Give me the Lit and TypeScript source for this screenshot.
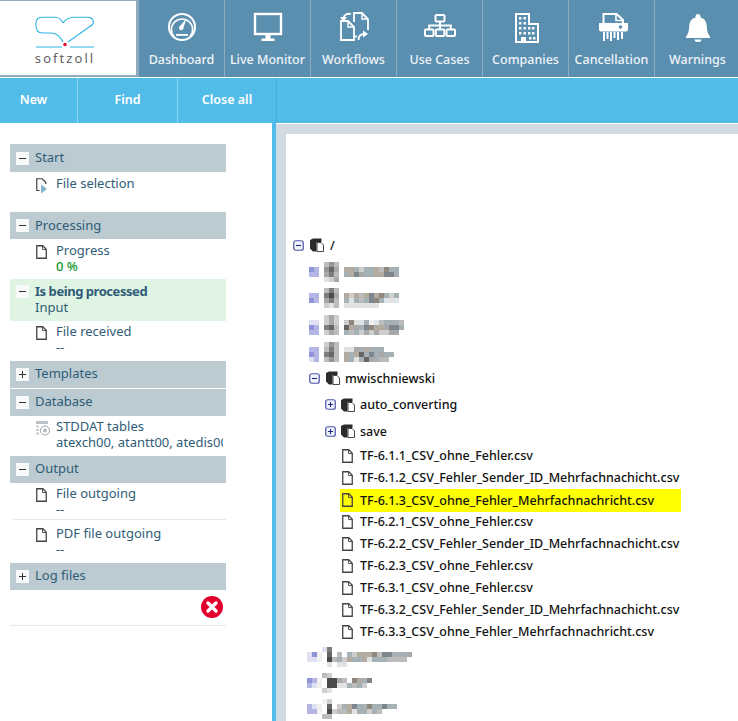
import { LitElement, html, css, svg } from "lit";
import { customElement } from "lit/decorators.js";

const NAV_ICONS: Record<string, unknown> = {
  dashboard: svg`<circle cx="18" cy="16" r="13" fill="none" stroke="#fff" stroke-width="2"/>
    <path d="M10 25.500a10.600 10.600 0 1 1 16 0" fill="none" stroke="#fff" stroke-width="1.600"/>
    <path d="M22.500 7.500l-3 9a2.300 2.300 0 1 1-3.400-1.600z" fill="#fff"/>
    <rect x="12" y="23" width="12" height="1.800" fill="#fff"/>`,
  monitor: svg`<rect x="5" y="3" width="26" height="20" fill="none" stroke="#fff" stroke-width="2.400"/>
    <rect x="15.500" y="24" width="5" height="4" fill="#fff"/>
    <rect x="11.500" y="27.500" width="13" height="2.500" fill="#fff"/>`,
  workflows: svg`<g fill="none" stroke="#fff" stroke-width="1.800">
      <path d="M5 10v19h13V16l-6-6z"/>
      <path d="M12 10v6h6" stroke-width="1.400"/>
      <path d="M18 11V2h8l6 6v11"/>
      <path d="M26 2v6h6" stroke-width="1.400"/>
      <path d="M18 25.500h3"/>
      <path d="M15 3C11 2 8 4 7.500 7"/>
      <path d="M22.500 29c0-4 2.500-6 6-6"/>
    </g>
    <path d="M4 6h7l-3.500 4.500zM27 19.500l5 3.500-5 3.500z" fill="#fff"/>`,
  usecases: svg`<g fill="none" stroke="#fff" stroke-width="2">
    <rect x="13.500" y="4" width="9" height="6.500" rx="1"/>
    <rect x="3" y="18.500" width="8.500" height="6.500" rx="1"/>
    <rect x="13.800" y="18.500" width="8.500" height="6.500" rx="1"/>
    <rect x="24.500" y="18.500" width="8.500" height="6.500" rx="1"/>
    <path d="M18 10.500v8M7.200 18.500v-4h21.600v4"/></g>`,
  companies: svg`<path d="M8 31V3h13v10h9v18z" fill="none" stroke="#fff" stroke-width="2"/>
    <path d="M11 6h2.400v2.600H11zM15.500 6h2.400v2.600h-2.400zM11 11h2.400v2.600H11zM15.500 11h2.400v2.600h-2.400zM11 16h2.400v2.600H11zM15.500 16h2.400v2.600h-2.400zM11 21h2.400v2.600H11zM15.500 21h2.400v2.600h-2.400zM20 16h2.400v2.600H20zM24 16h2.400v2.600H24zM20 21h2.400v2.600H20zM24 21h2.400v2.600H24zM13 26h5v5h-5zM21 26h2.400v2.600H21zM25 26h2.400v2.600H25z" fill="#fff"/>`,
  cancel: svg`<path d="M9.500 12V3h13l6.500 6v3" fill="none" stroke="#fff" stroke-width="2"/>
    <path d="M22 3v6.500h7" fill="none" stroke="#fff" stroke-width="1.600"/>
    <path d="M5 12h29v6.500a2 2 0 0 1-2 2H7a2 2 0 0 1-2-2z" fill="#fff"/>
    <circle cx="26.500" cy="16" r="1.800" fill="#5b8fb0"/>
    <path d="M9 21h2v9H9zM12.500 21h2v7h-2zM16 21h2v9h-2zM19.500 21h2v6h-2zM23 21h2v8h-2zM27 21h2v7h-2z" fill="#fff"/>`,
  bell: svg`<path d="M18 3a2.600 2.600 0 0 1 2.400 3.600c4.600 1 6.200 4.600 6.400 9.400.2 5 1.700 7.800 3.200 9.500v1.500H6v-1.500c1.500-1.700 3-4.500 3.200-9.500.2-4.800 1.800-8.400 6.400-9.400A2.600 2.600 0 0 1 18 3z" fill="#fff"/>
    <path d="M14.500 28.500h7a3.500 2.500 0 0 1-7 0z" fill="#fff"/>`,
};

const NAV = [
  ["Dashboard", "dashboard"],
  ["Live Monitor", "monitor"],
  ["Workflows", "workflows"],
  ["Use Cases", "usecases"],
  ["Companies", "companies"],
  ["Cancellation", "cancel"],
  ["Warnings", "bell"],
];

const FILES = [
  "TF-6.1.1_CSV_ohne_Fehler.csv",
  "TF-6.1.2_CSV_Fehler_Sender_ID_Mehrfachnachicht.csv",
  "TF-6.1.3_CSV_ohne_Fehler_Mehrfachnachricht.csv",
  "TF-6.2.1_CSV_ohne_Fehler.csv",
  "TF-6.2.2_CSV_Fehler_Sender_ID_Mehrfachnachicht.csv",
  "TF-6.2.3_CSV_ohne_Fehler.csv",
  "TF-6.3.1_CSV_ohne_Fehler.csv",
  "TF-6.3.2_CSV_Fehler_Sender_ID_Mehrfachnachicht.csv",
  "TF-6.3.3_CSV_ohne_Fehler_Mehrfachnachricht.csv",
];

// the reference has these folder names pixelated, one char per 5px block
const SHADES: Record<string, string> = {
  "1": "#4a4a4a", "2": "#666", "3": "#7d7d7d", "4": "#959595", "5": "#a8a8a8",
  "6": "#bcbcbc", "7": "#cecece", "8": "#e2e2e2", "9": "#f0f0f0",
  a: "#8f93d8", b: "#b4b7e4", c: "#dfe0f3",
  w: "#b3aaa0", k: "#a6b1b6", d: "#7d868d", e: "#8f877d", l: "#dde4ea",
};

const BLURRED_TOP = [
  ["...646", "ab.425.wwk7kkw6ekk", "bb.536.kwd5kkwwddk", "...875"],
  ["...636", "bb.315.w7w6wdwek7k", "ab.536.k8k6kdekl8l", "...786.8888888"],
  ["...757", "cc.757.7e8lk9l6kkk6", "ab.326.2w5kdeww5ddk", "bb.756.k6k75757755"],
  ["...746", "bb.636.885kwkkk", "ab.326.wkw2kdk5kk", "cb.646.wk8k25k66"],
];

const BLURRED_BOTTOM = [
  ["...c3...", "ca9.2.6.k7wwwe6ddkkk5", "cc9.16k7wkkw8kkk6666", "....8.88"],
  ["...67", "ab9.1156.ewkd", "bc9.1188k6k7", "...78"],
  ["...97", "bc9.2.7kwdkkekkdkk", "bb9.1766w8kk7k6", "...66"],
];

const block = (rows: string[]) => {
  const w = Math.max(...rows.map((r) => r.length)) * 5;
  const cells = rows.flatMap((row, y) =>
    [...row].map((ch, x) =>
      SHADES[ch] ? svg`<rect x=${x * 5} y=${y * 5} width="5" height="5" fill=${SHADES[ch]}/>` : null
    )
  );
  return html`<svg class="pixels" width=${w} height=${rows.length * 5}>${cells}</svg>`;
};

const fileIcon = html`<svg class="doc" width="11" height="14" viewBox="0 0 11 14">
  <path d="M.75.75h6l3.500 3.500v9h-9.500z" fill="none" stroke="#444" stroke-width="1.300"/>
  <path d="M6.500.75v3.800h3.700" fill="none" stroke="#444" stroke-width=".9"/>
</svg>`;

const folderIcon = html`<svg class="folder" width="14" height="14" viewBox="0 0 14 14">
  <path d="M0 2l3-1.500h8.500V4H6.500v9.500H3L0 10.500z" fill="#2b2b2b"/>
  <path d="M7 4.500h4l2.500 2.500v6.500H7z" fill="#fff" stroke="#333" stroke-width=".9"/>
</svg>`;

const treeToggle = (open: boolean) => html`<svg class="toggle" width="11" height="11" viewBox="0 0 11 11">
  <rect x=".75" y=".75" width="9.500" height="9.500" rx="2" fill="#f2f3fa" stroke="#4a55a8" stroke-width="1.200"/>
  <path d=${open ? "M3 5.500h5" : "M3 5.500h5M5.500 3v5"} stroke="#1c2a80" stroke-width="1.100"/>
</svg>`;

@customElement("app-root")
export class AppRoot extends LitElement {
  static styles = css`
    :host {
      display: block;
      width: 738px;
      height: 721px;
      overflow: hidden;
      background: #fff;
      font-family: "Noto Sans", "Open Sans", sans-serif;
      font-size: 13px;
    }
    .nav {
      display: flex;
      height: 77px;
      background: #5b8fb0;
      border-bottom: 1px solid #fff;
    }
    .logo-wrap {
      display: flex;
      flex: none;
      height: 77px;
      background: #8eabbf;
    }
    .logo {
      width: 136px;
      flex: none;
      height: 74px;
      margin-top: 1px;
      background: #fff;
      display: flex;
      flex-direction: column;
      align-items: center;
    }
    .logo-gap {
      width: 3px;
      flex: none;
    }
    .logo svg {
      display: block;
      margin: 14px 6px 0 0;
    }
    .logo span {
      font-family: "Open Sans", sans-serif;
      font-size: 13px;
      line-height: 15px;
      letter-spacing: 2.100px;
      color: #555;
      margin: 2px 6px 0 0;
    }
    .nav-item {
      width: 85px;
      flex: none;
      border-right: 1px solid #8eabbf;
      display: flex;
      flex-direction: column;
      align-items: center;
      color: #eef4f8;
      font-weight: 500;
      font-size: 12.500px;
    }
    .nav-item svg {
      display: block;
      margin-top: 11px;
    }
    .nav-item span {
      margin-top: 6px;
      line-height: 18px;
      white-space: nowrap;
    }
    .toolbar {
      display: flex;
      height: 45px;
      background: #52bce9;
      color: #fff;
      font-weight: 600;
      font-size: 12.500px;
    }
    .tool {
      display: flex;
      align-items: center;
      justify-content: center;
      box-sizing: border-box;
      padding-bottom: 2px;
      border-right: 1px solid #8fd3f0;
    }
    .tool.new {
      width: 78px;
      padding-right: 10px;
    }
    .tool.find {
      width: 100px;
    }
    .tool.close {
      width: 99px;
      border-right-color: #46a9d6;
    }
    .body {
      display: flex;
      height: 598px;
    }
    .left {
      width: 272px;
      flex: none;
      box-sizing: border-box;
      padding: 21px 46px 0 10px;
      color: #2f5c76;
    }
    .splitter {
      width: 4px;
      flex: none;
      background: #52bce9;
    }
    .right {
      flex: 1;
      margin-top: 1px;
      border-top: 10px solid #d3dbe2;
      border-left: 10px solid #d3dbe2;
      padding: 98px 0 0 7px;
      color: #111;
      overflow: hidden;
    }
    .head {
      display: flex;
      align-items: center;
      box-sizing: border-box;
      height: 27px;
      background: #bccbd2;
      padding: 0 0 2px 6px;
      gap: 6px;
    }
    .head.tall {
      height: 28px;
    }
    .head.up {
      padding-bottom: 3px;
    }
    .head.spaced {
      margin-bottom: 1px;
    }
    .box {
      width: 13px;
      height: 13px;
      flex: none;
      margin-top: 2px;
      background: #f7f9fa;
      position: relative;
    }
    .box::before {
      content: "";
      position: absolute;
      left: 3px;
      right: 3px;
      top: 6px;
      height: 1px;
      background: #333;
    }
    .box.plus::after {
      content: "";
      position: absolute;
      top: 3px;
      bottom: 3px;
      left: 6px;
      width: 1px;
      background: #333;
    }
    .item {
      display: flex;
      box-sizing: border-box;
      height: 40px;
      padding: 3px 3px 0 26px;
      line-height: 16px;
      gap: 9px;
      white-space: nowrap;
      overflow: hidden;
    }
    .item.db {
      gap: 6px;
      padding-top: 2px;
    }
    .item svg {
      flex: none;
      margin-top: 3px;
    }
    .item .lines {
      overflow: hidden;
    }
    .green {
      color: #0a9a2a;
      font-weight: 500;
    }
    .active {
      box-sizing: border-box;
      height: 42px;
      background: #e0f4e4;
      display: grid;
      grid-template-columns: 13px 1fr;
      align-content: start;
      column-gap: 6px;
      padding: 4px 0 0 6px;
      line-height: 16px;
    }
    .active b {
      font-weight: 700;
      letter-spacing: -0.450px;
      white-space: nowrap;
    }
    .active .sub {
      grid-column: 2;
    }
    .received {
      padding-top: 2px;
    }
    .divided {
      height: 37px;
      border-bottom: 1px solid #e6e9ea;
      margin-left: 3px;
      padding: 2px 3px 0 23px;
    }
    .tail {
      height: 43px;
      padding-top: 5px;
    }
    .error {
      display: flex;
      justify-content: flex-end;
      box-sizing: border-box;
      height: 36px;
      padding: 6px 3px 0 0;
      border-bottom: 1px solid #e6e9ea;
    }
    .row {
      display: flex;
      align-items: center;
      height: 26.600px;
      white-space: nowrap;
      font-size: 12.500px;
      font-weight: 500;
    }
    .row.file {
      height: 22px;
      width: 341px;
      margin-left: 47px;
      padding-left: 2px;
      box-sizing: border-box;
      gap: 7px;
    }
    .row.file.hit {
      background: #ffff00;
      height: 23px;
      margin-bottom: -1px;
    }
    .row.lvl0 {
      gap: 6px;
    }
    .row.lvl1 {
      margin-left: 16px;
      gap: 5.500px;
    }
    .row.lvl2 {
      margin-left: 32px;
      gap: 5px;
    }
    .blur {
      margin-left: 16px;
    }
    .blur.low {
      box-sizing: border-box;
      height: 26px;
      margin-left: 14px;
      padding-top: 2px;
    }
    .pixels,
    .toggle,
    .folder,
    .doc {
      display: block;
      flex: none;
    }
  `;

  private item(icon: unknown, a: unknown, b: unknown, cls = "") {
    return html`<div class="item ${cls}">${icon}<div class="lines"><div>${a}</div><div>${b}</div></div></div>`;
  }

  private renderLeft() {
    const playIcon = html`<svg width="11" height="17" viewBox="0 0 11 17">
      <path d="M3.500 12.500H.75V.75h5.500l3.500 3.500V6" fill="none" stroke="#444" stroke-width="1.200"/>
      <path d="M5 6.500l6 4.500-6 4.500z" fill="#7fb2cf"/>
    </svg>`;
    const dbIcon = html`<svg width="14" height="15" viewBox="0 0 14 15">
      <rect x="0" y="0" width="12" height="3" fill="#b9c3c8"/>
      <rect x="0" y="4.500" width="3" height="2" fill="#c6ced2"/>
      <rect x="0" y="8" width="3" height="2" fill="#c6ced2"/>
      <rect x="0" y="11.500" width="3" height="2" fill="#c6ced2"/>
      <circle cx="9" cy="9.500" r="4.500" fill="#fff" stroke="#9aa5aa"/>
      <circle cx="9" cy="9.500" r="2" fill="#b0b9bd"/>
    </svg>`;
    return html`<div class="left">
      <div class="head tall"><i class="box"></i>Start</div>
      ${this.item(playIcon, "File selection", "")}
      <div class="head"><i class="box"></i>Processing</div>
      ${this.item(fileIcon, "Progress", html`<span class="green">0 %</span>`)}
      <div class="active"><i class="box"></i><b>Is being processed</b><span class="sub">Input</span></div>
      ${this.item(fileIcon, "File received", "--", "received")}
      <div class="head spaced up"><i class="box plus"></i>Templates</div>
      <div class="head up"><i class="box"></i>Database</div>
      ${this.item(dbIcon, "STDDAT tables", "atexch00, atantt00, atedis00", "db")}
      <div class="head up"><i class="box"></i>Output</div>
      ${this.item(fileIcon, "File outgoing", "--", "divided")}
      ${this.item(fileIcon, "PDF file outgoing", "--", "tail")}
      <div class="head up"><i class="box plus"></i>Log files</div>
      <div class="error">
        <svg width="22" height="22" viewBox="0 0 22 22">
          <circle cx="11" cy="11" r="11" fill="#e2002d"/>
          <path d="M7 7l8 8M15 7l-8 8" stroke="#fff" stroke-width="3.400" stroke-linecap="round"/>
        </svg>
      </div>
    </div>`;
  }

  private renderTree() {
    return html`<div class="right">
      <div class="row lvl0">${treeToggle(true)}${folderIcon}<span>/</span></div>
      ${BLURRED_TOP.map((rows) => html`<div class="row blur">${block(rows)}</div>`)}
      <div class="row lvl1">${treeToggle(true)}${folderIcon}<span>mwischniewski</span></div>
      <div class="row lvl2">${treeToggle(false)}${folderIcon}<span>auto_converting</span></div>
      <div class="row lvl2">${treeToggle(false)}${folderIcon}<span>save</span></div>
      ${FILES.map(
        (f, i) => html`<div class="row file ${i === 2 ? "hit" : ""}">${fileIcon}<span>${f}</span></div>`
      )}
      ${BLURRED_BOTTOM.map((rows) => html`<div class="row blur low">${block(rows)}</div>`)}
    </div>`;
  }

  render() {
    return html`
      <div class="nav">
        <div class="logo-wrap">
          <div class="logo">
            <svg width="60" height="34" viewBox="0 0 60 34" fill="none" stroke="#2fb4e6" stroke-width="1.100">
              <path d="M28 8C26 4 24 2.300 20 2.300H8C3 2.300 1 4 1 8v3c0 4 2 7 7 7h8c6 0 9 3 12 9"/>
              <path d="M28 8c2-3 5-5.700 12-5.700h13c5 0 7 5 4 7.700L33 27"/>
              <path d="M1 32h26M35 32h24"/>
              <circle cx="30" cy="29.500" r="1.800" fill="#e8102a" stroke="none"/>
            </svg>
            <span>softzoll</span>
          </div>
          <div class="logo-gap"></div>
        </div>
        ${NAV.map(
          ([label, key]) => html`<div class="nav-item">
            <svg width="36" height="34" viewBox="0 0 36 34">${NAV_ICONS[key]}</svg>
            <span>${label}</span>
          </div>`
        )}
      </div>
      <div class="toolbar">
        <div class="tool new">New</div>
        <div class="tool find">Find</div>
        <div class="tool close">Close all</div>
      </div>
      <div class="body">${this.renderLeft()}<div class="splitter"></div>${this.renderTree()}</div>
    `;
  }
}
